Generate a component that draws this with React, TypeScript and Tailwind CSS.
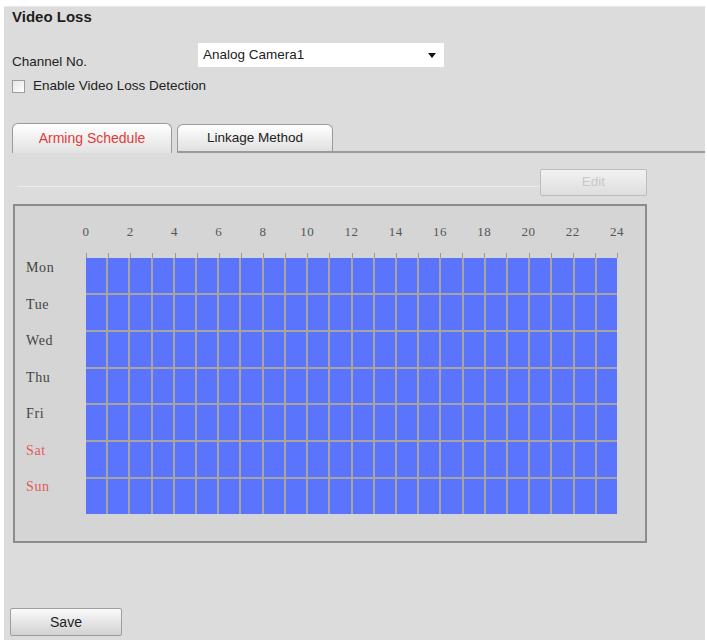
import React from "react";

const hours = Array.from({ length: 13 }, (_, i) => i * 2);
const ticks = Array.from({ length: 25 }, (_, i) => i);
const days = [
  { name: "Mon", weekend: false },
  { name: "Tue", weekend: false },
  { name: "Wed", weekend: false },
  { name: "Thu", weekend: false },
  { name: "Fri", weekend: false },
  { name: "Sat", weekend: true },
  { name: "Sun", weekend: true },
];

// every hour of the week is armed by default
const cells = Array.from({ length: 7 * 24 }, (_, i) => i);

function ScheduleGrid() {
  return (
    <div className="ml-[9px] w-[634px] h-[339px] border-2 border-[#8c8c8c] bg-[#d5d5d5] flex flex-col">
      {/* hour scale */}
      <div className="mt-[18px] ml-[61px] w-[551px] h-[16px] flex justify-between font-['Liberation_Serif',serif] text-[13px] tracking-[0.5px] leading-[16px] text-[#555]">
        {hours.map((h) => (
          <span key={h} className="w-[20px] text-center">
            {h}
          </span>
        ))}
      </div>
      <div className="mt-[13px] ml-[71px] w-[532px] h-[5px] flex justify-between">
        {ticks.map((t) => (
          <span key={t} className="w-px h-full bg-[#a09a88]" />
        ))}
      </div>

      <div className="flex">
        <div className="w-[71px] pl-[11px] h-[256px] flex flex-col font-['Liberation_Serif',serif] text-[14px] tracking-[0.6px]">
          {days.map((d) => (
            <div
              key={d.name}
              className={`flex-1 leading-[20px] ${d.weekend ? "text-[#e25a5a]" : "text-[#444]"}`}
            >
              {d.name}
            </div>
          ))}
        </div>
        <div className="w-[531px] h-[256px] grid grid-cols-24 grid-rows-7 gap-[2px] bg-[#a8a59e]">
          {cells.map((c) => (
            <div key={c} className="bg-[#5b74fd]" />
          ))}
        </div>
      </div>
    </div>
  );
}

export default function App() {
  return (
    <div className="w-[707px] h-[643px] bg-white pl-[4px] pt-[6px] font-['Liberation_Sans',Arial,sans-serif] text-[13.5px] text-[#222]">
      <div className="w-[701px] h-[634px] bg-[#dcdcdc] border-t border-[#e8e8e8] flex flex-col">
        <div className="h-[20px] pl-[8px] text-[15px] font-bold leading-[20px] text-[#1e1e1e]">
          Video Loss
        </div>

        {/* channel selector */}
        <div className="mt-[16px] h-[24px] flex">
          <span className="w-[194px] pl-[8px] pt-[12px] leading-[14px]">Channel No.</span>
          <div className="w-[246px] h-full bg-white flex items-center pl-[5px] pr-[8px]">
            <span className="flex-1">Analog Camera1</span>
            <svg width="8" height="5" viewBox="0 0 8 5">
              <path d="M0 0h8L4 5z" fill="#111" />
            </svg>
          </div>
        </div>

        <label className="mt-[12px] h-[14px] pl-[8px] flex items-center gap-[8px]">
          <span className="w-[13px] h-[13px] border border-[#9c9c9c] bg-linear-to-br from-[#e6e6e6] to-white" />
          <span className="leading-[14px]">Enable Video Loss Detection</span>
        </label>

        {/* tabs */}
        <div className="mt-[30px] h-[30px] flex items-end pl-[8px]">
          <div className="w-[160px] h-[30px] border border-b-0 border-[#9a9a9a] rounded-t-[6px] bg-linear-to-b from-white to-[#e2e2e2] flex items-center justify-center text-[14px] text-[#e23b3b]">
            Arming Schedule
          </div>
          <div className="w-[5px]" />
          <div className="w-[156px] h-[29px] border border-b-2 border-[#9a9a9a] rounded-t-[6px] bg-linear-to-b from-white to-[#e0e0e0] flex items-center justify-center text-[#222]">
            Linkage Method
          </div>
          <div className="flex-1 border-b-2 border-[#9a9a9a]" />
        </div>

        {/* edit toolbar */}
        <div className="mt-[16px] h-[27px] flex pl-[14px]">
          <div className="flex-1 self-end mb-[9px] h-px bg-[#b8b8b8] border-b border-[#ececec]" />
          <button
            disabled
            className="w-[107px] h-full border border-[#bdbdbd] rounded-[2px] bg-linear-to-b from-[#f2f2f2] to-[#dedede] text-[#c8c8c8]"
          >
            Edit
          </button>
          <div className="w-[58px]" />
        </div>

        <div className="mt-[8px]">
          <ScheduleGrid />
        </div>

        <div className="mt-[65px] pl-[6px]">
          <button className="w-[112px] h-[28px] border border-[#9e9e9e] rounded-[2px] bg-linear-to-b from-[#fafafa] to-[#d2d2d2] text-[14px] text-[#1e1e1e]">
            Save
          </button>
        </div>
      </div>
    </div>
  );
}
